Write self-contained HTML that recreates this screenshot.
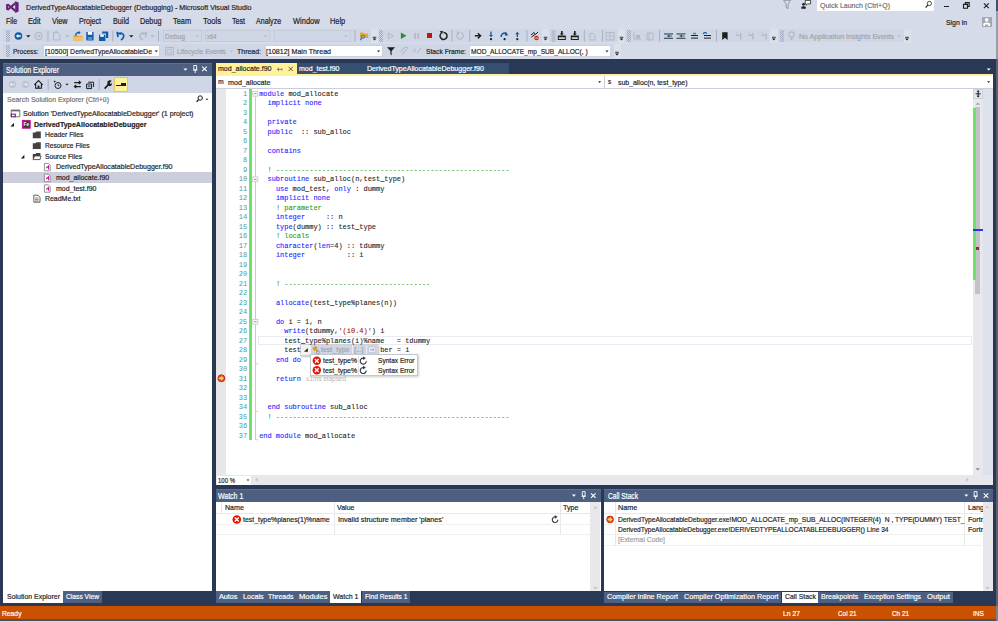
<!DOCTYPE html><html><head><meta charset="utf-8"><style>html,body{margin:0;padding:0;width:998px;height:621px;overflow:hidden;background:#293955;position:relative}.t{position:absolute;white-space:pre;line-height:1;transform-origin:0 0;-webkit-text-stroke:0.2px currentColor}</style></head><body><div style="position:absolute;left:0px;top:0px;width:998px;height:59px;background:#D6DBE9;"></div><div style="position:absolute;left:3px;top:29px;width:902px;height:13px;background:#CFD6E5;"></div><div style="position:absolute;left:3px;top:44.4px;width:610.6px;height:12.9px;background:#CFD6E5;"></div><div style="position:absolute;left:817px;top:0px;width:117px;height:11px;background:#FFFFFF;"></div><div style="position:absolute;left:43px;top:45px;width:117px;height:12px;background:#FFFFFF;border:1px solid #CCD2E0;box-sizing:border-box"></div><div style="position:absolute;left:264.5px;top:45px;width:118px;height:12px;background:#FFFFFF;border:1px solid #CCD2E0;box-sizing:border-box"></div><div style="position:absolute;left:469.3px;top:45px;width:142px;height:12px;background:#FFFFFF;border:1px solid #CCD2E0;box-sizing:border-box"></div><div style="position:absolute;left:163px;top:30px;width:38.5px;height:11.5px;background:transparent;border:1px solid #C5CBD8;box-sizing:border-box"></div><div style="position:absolute;left:204.7px;top:30px;width:65px;height:11.5px;background:transparent;border:1px solid #C5CBD8;box-sizing:border-box"></div><div style="position:absolute;left:273.6px;top:30px;width:77px;height:11.5px;background:transparent;border:1px solid #C5CBD8;box-sizing:border-box"></div><div style="position:absolute;left:3px;top:63px;width:209px;height:13px;background:#4D6082;"></div><div style="position:absolute;left:3px;top:63px;width:209px;height:0.8px;background:#5D6F92;"></div><div style="position:absolute;left:3px;top:76px;width:209px;height:17px;background:#CFD6E5;"></div><div style="position:absolute;left:3px;top:93px;width:209px;height:12px;background:#FFFFFF;"></div><div style="position:absolute;left:3px;top:105px;width:209px;height:486px;background:#FFFFFF;"></div><div style="position:absolute;left:3px;top:172.3px;width:209px;height:11px;background:#CCCEDB;"></div><div style="position:absolute;left:3px;top:591px;width:59.5px;height:11.5px;background:#FFFFFF;"></div><div style="position:absolute;left:63px;top:591px;width:38.5px;height:11.5px;background:#4D6082;"></div><div style="position:absolute;left:215.5px;top:63px;width:81.5px;height:12px;background:#FFF29D;"></div><div style="position:absolute;left:297px;top:63px;width:212px;height:11px;background:#364E6F;"></div><div style="position:absolute;left:215.5px;top:74px;width:777px;height:1.5px;background:#FFF29D;"></div><div style="position:absolute;left:215.5px;top:75.5px;width:777px;height:12.5px;background:#FFFFFF;"></div><div style="position:absolute;left:215.5px;top:88px;width:777px;height:1px;background:#CCCEDB;"></div><div style="position:absolute;left:215.5px;top:89px;width:777px;height:386px;background:#FFFFFF;"></div><div style="position:absolute;left:215.5px;top:89px;width:10.8px;height:385.5px;background:#E6E7E8;"></div><div style="position:absolute;left:248.5px;top:89px;width:3px;height:351px;background:#6CE26C;"></div><div style="position:absolute;left:972px;top:89px;width:20px;height:386px;background:#FFFFFF;"></div><div style="position:absolute;left:975px;top:104px;width:6px;height:365px;background:#E8E8EC;"></div><div style="position:absolute;left:973px;top:107.6px;width:2.5px;height:172px;background:#6CE26C;"></div><div style="position:absolute;left:975.5px;top:107px;width:5px;height:187px;background:#C2C3C9;"></div><div style="position:absolute;left:215.5px;top:474.5px;width:777.3px;height:10.7px;background:#E8E8EC;"></div><div style="position:absolute;left:216.5px;top:475.5px;width:34px;height:9px;background:#FFFFFF;"></div><div style="position:absolute;left:215.5px;top:489.2px;width:385px;height:12.5px;background:#4D6082;"></div><div style="position:absolute;left:215.5px;top:489.2px;width:385px;height:0.8px;background:#5D6F92;"></div><div style="position:absolute;left:215.5px;top:501.6px;width:385px;height:89px;background:#FFFFFF;"></div><div style="position:absolute;left:590.2px;top:501.6px;width:10.2px;height:89px;background:#E8E8EC;"></div><div style="position:absolute;left:220.9px;top:501.6px;width:0.8px;height:11.5px;background:#E4E4EA;"></div><div style="position:absolute;left:215.5px;top:513px;width:375px;height:1px;background:#E8E8EC;"></div><div style="position:absolute;left:333.8px;top:501.6px;width:1px;height:33px;background:#E8E8EC;"></div><div style="position:absolute;left:559.8px;top:501.6px;width:1px;height:33px;background:#E8E8EC;"></div><div style="position:absolute;left:215.5px;top:524.2px;width:375px;height:1px;background:#F0F0F0;"></div><div style="position:absolute;left:215.5px;top:534.4px;width:375px;height:1px;background:#F0F0F0;"></div><div style="position:absolute;left:215.5px;top:590.5px;width:114px;height:12px;background:#4D6082;"></div><div style="position:absolute;left:329.6px;top:590.5px;width:31.6px;height:12px;background:#FFFFFF;"></div><div style="position:absolute;left:362px;top:590.5px;width:48.4px;height:12px;background:#4D6082;"></div><div style="position:absolute;left:604.2px;top:489.2px;width:388.6px;height:12.5px;background:#4D6082;"></div><div style="position:absolute;left:604.2px;top:489.2px;width:388.6px;height:0.8px;background:#5D6F92;"></div><div style="position:absolute;left:604.2px;top:501.6px;width:388.6px;height:89px;background:#FFFFFF;"></div><div style="position:absolute;left:982.5px;top:501.6px;width:10.3px;height:89px;background:#E8E8EC;"></div><div style="position:absolute;left:604.2px;top:513px;width:378px;height:1px;background:#E8E8EC;"></div><div style="position:absolute;left:614.9px;top:501.6px;width:1px;height:43px;background:#E8E8EC;"></div><div style="position:absolute;left:964.3px;top:501.6px;width:1px;height:43px;background:#E8E8EC;"></div><div style="position:absolute;left:604.2px;top:523.9px;width:378px;height:1px;background:#F0F0F0;"></div><div style="position:absolute;left:604.2px;top:534.3px;width:378px;height:1px;background:#F0F0F0;"></div><div style="position:absolute;left:604.2px;top:544.5px;width:378px;height:1px;background:#F0F0F0;"></div><div style="position:absolute;left:604.2px;top:591.7px;width:177px;height:11px;background:#4D6082;"></div><div style="position:absolute;left:781.5px;top:591.7px;width:36px;height:11px;background:#FFFFFF;"></div><div style="position:absolute;left:817.5px;top:591.7px;width:135.5px;height:11px;background:#4D6082;"></div><div style="position:absolute;left:0px;top:606.4px;width:998px;height:12.8px;background:#CA5100;"></div><div style="position:absolute;left:0px;top:619.2px;width:998px;height:1.8px;background:#4A5060;"></div><div style="position:absolute;left:943.7px;top:6.1px;width:5.4px;height:1.3px;background:#1E1E1E;"></div><div style="position:absolute;left:981.7px;top:16.8px;width:10px;height:10px;background:#A5A8B0;"></div><div style="position:absolute;left:996px;top:0px;width:2px;height:621px;background:#596070;"></div><div style="position:absolute;left:996px;top:0px;width:2px;height:11px;background:#3A5478;"></div><div style="position:absolute;left:996px;top:11px;width:2px;height:48px;background:#9A9EA8;"></div><div style="position:absolute;left:996px;top:606.4px;width:2px;height:15px;background:#7A7F88;"></div><div style="position:absolute;left:371px;top:29px;width:7px;height:13.5px;background:#DCE1EC;"></div><div style="position:absolute;left:427.2px;top:33.2px;width:5px;height:4.9px;background:#C0160A;"></div><div style="position:absolute;left:541.5px;top:29px;width:7px;height:13.5px;background:#DCE1EC;"></div><div style="position:absolute;left:618px;top:29px;width:7px;height:13.5px;background:#DCE1EC;"></div><div style="position:absolute;left:770px;top:29px;width:7.5px;height:13.5px;background:#DCE1EC;"></div><div style="position:absolute;left:903.6px;top:29px;width:7px;height:13.8px;background:#DCE1EC;"></div><div style="position:absolute;left:613.6px;top:44px;width:7px;height:13.5px;background:#DCE1EC;"></div><div style="position:absolute;left:114.4px;top:77.3px;width:13.4px;height:14.3px;background:#FFF29D;border:1px solid #E5C365;box-sizing:border-box"></div><div style="position:absolute;left:116.4px;top:85.2px;width:9.8px;height:0.9px;background:#1E1E1E;"></div><div style="position:absolute;left:120.6px;top:83.4px;width:5.6px;height:2.6px;background:#1E1E1E;"></div><div style="position:absolute;left:603.6px;top:76px;width:1px;height:12px;background:#CCCEDB;"></div><div style="position:absolute;left:983.2px;top:89px;width:9.6px;height:386px;background:#DDE1EB;"></div><div style="position:absolute;left:973.2px;top:89px;width:10px;height:386px;background:#E8E8EC;"></div><div style="position:absolute;left:973.2px;top:89px;width:10px;height:9.5px;background:#E3E8F3;border:1px solid #C9D0DF;box-sizing:border-box"></div><div style="position:absolute;left:975.1px;top:107px;width:5.2px;height:187.4px;background:#C2C3C9;"></div><div style="position:absolute;left:973px;top:107.6px;width:3px;height:172.2px;background:#6CE26C;"></div><div style="position:absolute;left:972.5px;top:229.3px;width:10.7px;height:1.6px;background:#3535E0;"></div><div style="position:absolute;left:976.2px;top:246.8px;width:3.3px;height:3.2px;background:#A0262A;"></div><div style="position:absolute;left:258.4px;top:335.8px;width:713.6px;height:9.2px;background:transparent;border:1.3px solid #EAEAF1;box-sizing:border-box"></div><div style="position:absolute;left:300.2px;top:343.9px;width:78.2px;height:11.8px;background:#F2F2F2;border:1px solid #CDD0D8;box-sizing:border-box;box-shadow:1px 1px 2px rgba(0,0,0,0.25)"></div><div style="position:absolute;left:310.6px;top:344.6px;width:67px;height:10.4px;background:#CED5E4;"></div><div style="position:absolute;left:351.6px;top:345px;width:0.8px;height:9.6px;background:#E8ECF4;"></div><div style="position:absolute;left:366px;top:345px;width:0.8px;height:9.6px;background:#E8ECF4;"></div><div style="position:absolute;left:310.4px;top:354.3px;width:107.6px;height:21.5px;background:#FFFFFF;border:1px solid #C3C6CF;box-sizing:border-box;box-shadow:1px 1px 2px rgba(0,0,0,0.2)"></div><div style="position:absolute;left:357.9px;top:356.3px;width:0.8px;height:9px;background:#E0E0E0;"></div><div style="position:absolute;left:357.9px;top:365.7px;width:0.8px;height:9px;background:#E0E0E0;"></div><svg style="position:absolute;left:0;top:0" width="998" height="621" viewBox="0 0 998 621"><g fill="#68217A"><path d="M15.2 1.3 L18.6 2.6 V11.5 L15.2 12.9 Z"/><path d="M6.1 4.3 L8.3 3.7 V10.4 L6.1 9.8 Z"/><path d="M15.6 1.6 V4.6 L8.3 10.4 L7 9.2 Z"/><path d="M15.6 12.6 V9.6 L8.3 3.7 L7 4.9 Z"/></g><path d="M783.6 0.3 H790.6 L788 4.3 V8.6 L786.2 7.6 V4.3 Z" fill="none" stroke="#8E929C" stroke-width="0.9"/><circle cx="803.6" cy="4.3" r="1.4" fill="#1E1E1E"/><path d="M801.4 8.8 V6.8 Q803.6 5.6 805.8 6.8 V8.8 Z" fill="#1E1E1E"/><path d="M805.2 0.4 H810.6 V3.9 H807.6 L806.2 5.2 V3.9 H805.2 Z" fill="#fff" stroke="#1E1E1E" stroke-width="0.8"/><circle cx="929.4" cy="3.5" r="2.1" fill="none" stroke="#333" stroke-width="0.9"/><path d="M927.9 5 L925.6 7.6" stroke="#333" stroke-width="1.2"/><path d="M965.4 4.2 V2.6 H969.2 V6.4 H967.6 M963.5 4.4 H967.5 V8.2 H963.5 Z" fill="none" stroke="#1E1E1E" stroke-width="1.1"/><path d="M983.9 3.3 L988.8 8.1 M988.8 3.3 L983.9 8.1" stroke="#1E1E1E" stroke-width="1.1"/><circle cx="986.7" cy="19.9" r="1.8" fill="#fff"/><path d="M983.3 25.9 V23.4 Q986.7 21.6 990.1 23.4 V25.9 H988.3 V24.6 H985.1 V25.9 Z" fill="#fff"/><rect x="6" y="30" width="1" height="1" fill="#A3AABB"/><rect x="8" y="30" width="1" height="1" fill="#A3AABB"/><rect x="7" y="31" width="1" height="1" fill="#A3AABB"/><rect x="9" y="31" width="1" height="1" fill="#A3AABB"/><rect x="6" y="32" width="1" height="1" fill="#A3AABB"/><rect x="8" y="32" width="1" height="1" fill="#A3AABB"/><rect x="7" y="33" width="1" height="1" fill="#A3AABB"/><rect x="9" y="33" width="1" height="1" fill="#A3AABB"/><rect x="6" y="34" width="1" height="1" fill="#A3AABB"/><rect x="8" y="34" width="1" height="1" fill="#A3AABB"/><rect x="7" y="35" width="1" height="1" fill="#A3AABB"/><rect x="9" y="35" width="1" height="1" fill="#A3AABB"/><rect x="6" y="36" width="1" height="1" fill="#A3AABB"/><rect x="8" y="36" width="1" height="1" fill="#A3AABB"/><rect x="7" y="37" width="1" height="1" fill="#A3AABB"/><rect x="9" y="37" width="1" height="1" fill="#A3AABB"/><rect x="6" y="38" width="1" height="1" fill="#A3AABB"/><rect x="8" y="38" width="1" height="1" fill="#A3AABB"/><rect x="7" y="39" width="1" height="1" fill="#A3AABB"/><rect x="9" y="39" width="1" height="1" fill="#A3AABB"/><rect x="6" y="40" width="1" height="1" fill="#A3AABB"/><rect x="8" y="40" width="1" height="1" fill="#A3AABB"/><rect x="7" y="41" width="1" height="1" fill="#A3AABB"/><rect x="9" y="41" width="1" height="1" fill="#A3AABB"/><circle cx="18.4" cy="36" r="3.8" fill="#0E5AA7"/><path d="M16 36 L18.2 33.9 V35.3 H20.8 V36.7 H18.2 V38.1 Z" fill="#fff"/><path d="M26.1 35.199999999999996 H30.5 L28.3 37.62 Z" fill="#1E1E1E"/><circle cx="38.5" cy="36" r="3.6" fill="none" stroke="#B3B8C3" stroke-width="1.2"/><path d="M40.6 36 L38.6 34.2 V35.4 H36.4 V36.6 H38.6 V37.8 Z" fill="#B3B8C3"/><rect x="47.5" y="31" width="1" height="10.5" fill="#A9B0BF"/><path d="M53.5 32.5 H57.8 L60 34.7 V40 H53.5 Z" fill="none" stroke="#B3B8C3" stroke-width="1"/><rect x="55" y="31" width="2" height="2" fill="#B3B8C3"/><path d="M65.1 35.199999999999996 H69.5 L67.3 37.62 Z" fill="#B3B8C3"/><path d="M73.5 35 H77 L78 36 H82.4 V40.6 H73.5 Z" fill="#E8A735"/><path d="M73.5 37 H82.6 V40.6 H73.5 Z" fill="#F2C26A"/><path d="M75 35.5 Q75 32 78.5 32 V30.8 L80.6 32.6 L78.5 34.4 V33.2 Q76.2 33.2 76.2 35.5 Z" fill="#0E5AA7"/><path d="M86.3 32 H93.6 V40.4 H86.3 Z" fill="#0E5AA7"/><rect x="87.8" y="32" width="4.4" height="2.8" fill="#fff"/><rect x="87.8" y="37" width="4.4" height="3.4" fill="#5A8FCC"/><path d="M99 34.8 H105.4 V41 H99 Z" fill="#0E5AA7"/><rect x="100.2" y="34.8" width="3.6" height="2" fill="#fff"/><path d="M102.2 31.4 H108.2 V38 H106 V33.4 H102.2 Z" fill="#0E5AA7"/><rect x="112.3" y="31" width="1" height="10.5" fill="#A9B0BF"/><path d="M118 37.2 L117.2 32.8 L121 34.3 M118 34 Q121.5 31.8 123.5 34.8 Q124.5 37.5 121 40" fill="none" stroke="#0E5AA7" stroke-width="1.6"/><path d="M129.10000000000002 35.199999999999996 H133.5 L131.3 37.62 Z" fill="#1E1E1E"/><path d="M145.6 37.2 L146.4 32.8 L142.6 34.3 M145.6 34 Q142.1 31.8 140.1 34.8 Q139.1 37.5 142.6 40" fill="none" stroke="#B3B8C3" stroke-width="1.5"/><path d="M150.4 35.199999999999996 H154.79999999999998 L152.6 37.62 Z" fill="#B3B8C3"/><rect x="158" y="31" width="1" height="10.5" fill="#A9B0BF"/><path d="M195.6 35.5 H198.79999999999998 L197.2 37.26 Z" fill="#B3B8C3"/><path d="M263.9 35.5 H267.1 L265.5 37.26 Z" fill="#B3B8C3"/><path d="M344.4 35.5 H347.6 L346 37.26 Z" fill="#B3B8C3"/><rect x="354.5" y="30" width="1" height="11.5" fill="#A9B0BF"/><path d="M360 32.5 H363 L364 33.5 H368.2 V38 H360 Z" fill="#E8A735"/><circle cx="363" cy="36.6" r="1.6" fill="none" stroke="#2B79D0" stroke-width="1"/><path d="M362 37.8 L360.2 40" stroke="#2B79D0" stroke-width="1.2"/><rect x="372.7" y="36.8" width="3.6" height="0.9" fill="#1E1E1E"/><path d="M372.6 38.4 H376.4 L374.5 40.6 Z" fill="#1E1E1E"/><rect x="379" y="30" width="1" height="1" fill="#A3AABB"/><rect x="381" y="30" width="1" height="1" fill="#A3AABB"/><rect x="380" y="31" width="1" height="1" fill="#A3AABB"/><rect x="382" y="31" width="1" height="1" fill="#A3AABB"/><rect x="379" y="32" width="1" height="1" fill="#A3AABB"/><rect x="381" y="32" width="1" height="1" fill="#A3AABB"/><rect x="380" y="33" width="1" height="1" fill="#A3AABB"/><rect x="382" y="33" width="1" height="1" fill="#A3AABB"/><rect x="379" y="34" width="1" height="1" fill="#A3AABB"/><rect x="381" y="34" width="1" height="1" fill="#A3AABB"/><rect x="380" y="35" width="1" height="1" fill="#A3AABB"/><rect x="382" y="35" width="1" height="1" fill="#A3AABB"/><rect x="379" y="36" width="1" height="1" fill="#A3AABB"/><rect x="381" y="36" width="1" height="1" fill="#A3AABB"/><rect x="380" y="37" width="1" height="1" fill="#A3AABB"/><rect x="382" y="37" width="1" height="1" fill="#A3AABB"/><rect x="379" y="38" width="1" height="1" fill="#A3AABB"/><rect x="381" y="38" width="1" height="1" fill="#A3AABB"/><rect x="380" y="39" width="1" height="1" fill="#A3AABB"/><rect x="382" y="39" width="1" height="1" fill="#A3AABB"/><rect x="379" y="40" width="1" height="1" fill="#A3AABB"/><rect x="381" y="40" width="1" height="1" fill="#A3AABB"/><rect x="380" y="41" width="1" height="1" fill="#A3AABB"/><rect x="382" y="41" width="1" height="1" fill="#A3AABB"/><path d="M388.3 32.8 L393.2 35.8 L388.3 38.8 Z" fill="none" stroke="#B3B8C3" stroke-width="1"/><path d="M400.9 32.5 L406.4 35.8 L400.9 39.1 Z" fill="#2A8F2A"/><rect x="414.2" y="33" width="1.6" height="6" fill="#B3B8C3"/><rect x="417.4" y="33" width="1.6" height="6" fill="#B3B8C3"/><path d="M441 33.5 A3.5 3.5 0 1 0 443.5 32.4" fill="none" stroke="#1E1E1E" stroke-width="1.5"/><path d="M439.6 31.2 L443.2 31 L442 34.2 Z" fill="#1E1E1E"/><rect x="451.5" y="30" width="1" height="11.5" fill="#A9B0BF"/><path d="M458 33.5 A3.2 3.2 0 1 0 461 32.8" fill="none" stroke="#B3B8C3" stroke-width="1.2"/><path d="M456.4 31.6 L460.2 31.8 L458.2 34.6 Z" fill="#B3B8C3"/><rect x="469.2" y="30" width="1" height="11.5" fill="#A9B0BF"/><path d="M474.8 35.8 H480.2 M477.8 33.2 L480.6 35.8 L477.8 38.4" fill="none" stroke="#1E1E1E" stroke-width="1.4"/><path d="M491 31.5 V36" stroke="#0E5AA7" stroke-width="1.3"/><path d="M489 35 H493 L491 37.2 Z" fill="#0E5AA7"/><circle cx="491" cy="39.2" r="1.1" fill="#1E1E1E"/><path d="M501 37 Q501.5 32.8 505.5 33 L507 34" fill="none" stroke="#0E5AA7" stroke-width="1.5"/><path d="M505.6 31.8 L508.4 35.4 L504.6 35.6 Z" fill="#0E5AA7"/><circle cx="504.6" cy="39.2" r="1.1" fill="#1E1E1E"/><path d="M517.3 37 V33.5" stroke="#0E5AA7" stroke-width="1.3"/><path d="M515.3 34.2 H519.3 L517.3 31.8 Z" fill="#0E5AA7"/><circle cx="517.3" cy="39.2" r="1.1" fill="#1E1E1E"/><rect x="526.5" y="30" width="1" height="11.5" fill="#A9B0BF"/><path d="M531 35 L534 32.5 L535.5 34.5 L538 32 M531.5 37 L535 34.5" fill="none" stroke="#1E1E1E" stroke-width="1"/><circle cx="536.5" cy="38" r="2.2" fill="#E51400"/><rect x="535.3" y="37.6" width="2.4" height="0.9" fill="#fff"/><rect x="543.7" y="36.8" width="3.6" height="0.9" fill="#1E1E1E"/><path d="M543.6 38.4 H547.4 L545.5 40.6 Z" fill="#1E1E1E"/><rect x="551.5" y="30" width="1" height="1" fill="#A3AABB"/><rect x="553.5" y="30" width="1" height="1" fill="#A3AABB"/><rect x="552.5" y="31" width="1" height="1" fill="#A3AABB"/><rect x="554.5" y="31" width="1" height="1" fill="#A3AABB"/><rect x="551.5" y="32" width="1" height="1" fill="#A3AABB"/><rect x="553.5" y="32" width="1" height="1" fill="#A3AABB"/><rect x="552.5" y="33" width="1" height="1" fill="#A3AABB"/><rect x="554.5" y="33" width="1" height="1" fill="#A3AABB"/><rect x="551.5" y="34" width="1" height="1" fill="#A3AABB"/><rect x="553.5" y="34" width="1" height="1" fill="#A3AABB"/><rect x="552.5" y="35" width="1" height="1" fill="#A3AABB"/><rect x="554.5" y="35" width="1" height="1" fill="#A3AABB"/><rect x="551.5" y="36" width="1" height="1" fill="#A3AABB"/><rect x="553.5" y="36" width="1" height="1" fill="#A3AABB"/><rect x="552.5" y="37" width="1" height="1" fill="#A3AABB"/><rect x="554.5" y="37" width="1" height="1" fill="#A3AABB"/><rect x="551.5" y="38" width="1" height="1" fill="#A3AABB"/><rect x="553.5" y="38" width="1" height="1" fill="#A3AABB"/><rect x="552.5" y="39" width="1" height="1" fill="#A3AABB"/><rect x="554.5" y="39" width="1" height="1" fill="#A3AABB"/><rect x="551.5" y="40" width="1" height="1" fill="#A3AABB"/><rect x="553.5" y="40" width="1" height="1" fill="#A3AABB"/><rect x="552.5" y="41" width="1" height="1" fill="#A3AABB"/><rect x="554.5" y="41" width="1" height="1" fill="#A3AABB"/><path d="M557.8 35.5 V40 H565.8 V35.5" fill="#1E1E1E"/><rect x="558.8" y="37.4" width="6" height="1.4" fill="#fff"/><path d="M561.0 31 H562.5999999999999 V33.6 H563.8 L561.8 35.6 L559.8 33.6 H561.0 Z" fill="#1E1E1E"/><path d="M570.8 35.5 V40 H578.8 V35.5" fill="#1E1E1E"/><rect x="571.8" y="37.4" width="6" height="1.4" fill="#fff"/><path d="M574.0 31 H575.5999999999999 V33.6 H576.8 L574.8 35.6 L572.8 33.6 H574.0 Z" fill="#1E1E1E"/><rect x="583.8" y="30" width="1" height="11.5" fill="#A9B0BF"/><path d="M590 33.5 H593 L595 35.5 V40 H590 Z" fill="none" stroke="#B3B8C3" stroke-width="1"/><rect x="602" y="30" width="1" height="11.5" fill="#A9B0BF"/><rect x="606" y="32.5" width="8" height="7.5" fill="none" stroke="#B3B8C3" stroke-width="1"/><path d="M606 36 H614 M610 32.5 V40" stroke="#B3B8C3" stroke-width="0.8"/><rect x="619.7" y="36.8" width="3.6" height="0.9" fill="#1E1E1E"/><path d="M619.6 38.4 H623.4 L621.5 40.6 Z" fill="#1E1E1E"/><rect x="627" y="30" width="1" height="1" fill="#A3AABB"/><rect x="629" y="30" width="1" height="1" fill="#A3AABB"/><rect x="628" y="31" width="1" height="1" fill="#A3AABB"/><rect x="630" y="31" width="1" height="1" fill="#A3AABB"/><rect x="627" y="32" width="1" height="1" fill="#A3AABB"/><rect x="629" y="32" width="1" height="1" fill="#A3AABB"/><rect x="628" y="33" width="1" height="1" fill="#A3AABB"/><rect x="630" y="33" width="1" height="1" fill="#A3AABB"/><rect x="627" y="34" width="1" height="1" fill="#A3AABB"/><rect x="629" y="34" width="1" height="1" fill="#A3AABB"/><rect x="628" y="35" width="1" height="1" fill="#A3AABB"/><rect x="630" y="35" width="1" height="1" fill="#A3AABB"/><rect x="627" y="36" width="1" height="1" fill="#A3AABB"/><rect x="629" y="36" width="1" height="1" fill="#A3AABB"/><rect x="628" y="37" width="1" height="1" fill="#A3AABB"/><rect x="630" y="37" width="1" height="1" fill="#A3AABB"/><rect x="627" y="38" width="1" height="1" fill="#A3AABB"/><rect x="629" y="38" width="1" height="1" fill="#A3AABB"/><rect x="628" y="39" width="1" height="1" fill="#A3AABB"/><rect x="630" y="39" width="1" height="1" fill="#A3AABB"/><rect x="627" y="40" width="1" height="1" fill="#A3AABB"/><rect x="629" y="40" width="1" height="1" fill="#A3AABB"/><rect x="628" y="41" width="1" height="1" fill="#A3AABB"/><rect x="630" y="41" width="1" height="1" fill="#A3AABB"/><path d="M634 32.5 V39 H641" fill="none" stroke="#B3B8C3" stroke-width="1.2"/><rect x="636" y="35" width="4" height="3.5" fill="#B3B8C3"/><path d="M647 33 H653 V40 H647 Z M649 33 V40" fill="none" stroke="#B3B8C3" stroke-width="1"/><rect x="659" y="30" width="1" height="11.5" fill="#A9B0BF"/><rect x="664.0" y="33.5" width="9" height="0.9" fill="#1E1E1E"/><rect x="664.0" y="37.8" width="9" height="0.9" fill="#1E1E1E"/><path d="M666.5 36 L669.5 34.4 V37.6 Z" fill="#0E5AA7"/><rect x="668.5" y="35.6" width="3.5" height="0.9" fill="#0E5AA7"/><rect x="676.5" y="33.5" width="9" height="0.9" fill="#1E1E1E"/><rect x="676.5" y="37.8" width="9" height="0.9" fill="#1E1E1E"/><path d="M679 36 L682 34.4 V37.6 Z" fill="#0E5AA7"/><rect x="681" y="35.6" width="3.5" height="0.9" fill="#0E5AA7"/><rect x="691" y="35" width="7" height="1" fill="#1E1E1E"/><rect x="691" y="37.6" width="7" height="1" fill="#1E1E1E"/><rect x="693" y="32.8" width="3" height="1.6" fill="#3CAA3C"/><rect x="704" y="35" width="7" height="1" fill="#1E1E1E"/><rect x="704" y="37.6" width="7" height="1" fill="#1E1E1E"/><path d="M703 33.8 Q705 31.6 707 33.4" fill="none" stroke="#0E5AA7" stroke-width="1.1"/><rect x="716" y="30" width="1" height="11.5" fill="#A9B0BF"/><path d="M722.2 32.2 H727.6 V40 L724.9 37.8 L722.2 40 Z" fill="#1E1E1E"/><path d="M736.3 32.5 L738.8 35 M735.8 35.5 H739.8" fill="none" stroke="#B3B8C3" stroke-width="1"/><rect x="740.0" y="33" width="1.4" height="6.5" fill="#B3B8C3"/><path d="M748.5 32.5 L751 35 M748 35.5 H752" fill="none" stroke="#B3B8C3" stroke-width="1"/><rect x="752.2" y="33" width="1.4" height="6.5" fill="#B3B8C3"/><path d="M761.7 32.5 L764.2 35 M761.2 35.5 H765.2" fill="none" stroke="#B3B8C3" stroke-width="1"/><rect x="765.4000000000001" y="33" width="1.4" height="6.5" fill="#B3B8C3"/><rect x="772.0" y="36.8" width="3.6" height="0.9" fill="#1E1E1E"/><path d="M771.9 38.4 H775.6999999999999 L773.8 40.6 Z" fill="#1E1E1E"/><rect x="780" y="30" width="1" height="1" fill="#A3AABB"/><rect x="782" y="30" width="1" height="1" fill="#A3AABB"/><rect x="781" y="31" width="1" height="1" fill="#A3AABB"/><rect x="783" y="31" width="1" height="1" fill="#A3AABB"/><rect x="780" y="32" width="1" height="1" fill="#A3AABB"/><rect x="782" y="32" width="1" height="1" fill="#A3AABB"/><rect x="781" y="33" width="1" height="1" fill="#A3AABB"/><rect x="783" y="33" width="1" height="1" fill="#A3AABB"/><rect x="780" y="34" width="1" height="1" fill="#A3AABB"/><rect x="782" y="34" width="1" height="1" fill="#A3AABB"/><rect x="781" y="35" width="1" height="1" fill="#A3AABB"/><rect x="783" y="35" width="1" height="1" fill="#A3AABB"/><rect x="780" y="36" width="1" height="1" fill="#A3AABB"/><rect x="782" y="36" width="1" height="1" fill="#A3AABB"/><rect x="781" y="37" width="1" height="1" fill="#A3AABB"/><rect x="783" y="37" width="1" height="1" fill="#A3AABB"/><rect x="780" y="38" width="1" height="1" fill="#A3AABB"/><rect x="782" y="38" width="1" height="1" fill="#A3AABB"/><rect x="781" y="39" width="1" height="1" fill="#A3AABB"/><rect x="783" y="39" width="1" height="1" fill="#A3AABB"/><rect x="780" y="40" width="1" height="1" fill="#A3AABB"/><rect x="782" y="40" width="1" height="1" fill="#A3AABB"/><rect x="781" y="41" width="1" height="1" fill="#A3AABB"/><rect x="783" y="41" width="1" height="1" fill="#A3AABB"/><circle cx="791.5" cy="34.5" r="2.6" fill="none" stroke="#B3B8C3" stroke-width="1.1"/><rect x="790.4" y="37.4" width="2.2" height="2.6" fill="#B3B8C3"/><path d="M897.6999999999999 35.5 H900.9 L899.3 37.26 Z" fill="#B3B8C3"/><rect x="905.2" y="36.8" width="3.6" height="0.9" fill="#1E1E1E"/><path d="M905.1 38.4 H908.9 L907 40.6 Z" fill="#1E1E1E"/><rect x="6" y="45" width="1" height="1" fill="#A3AABB"/><rect x="8" y="45" width="1" height="1" fill="#A3AABB"/><rect x="7" y="46" width="1" height="1" fill="#A3AABB"/><rect x="9" y="46" width="1" height="1" fill="#A3AABB"/><rect x="6" y="47" width="1" height="1" fill="#A3AABB"/><rect x="8" y="47" width="1" height="1" fill="#A3AABB"/><rect x="7" y="48" width="1" height="1" fill="#A3AABB"/><rect x="9" y="48" width="1" height="1" fill="#A3AABB"/><rect x="6" y="49" width="1" height="1" fill="#A3AABB"/><rect x="8" y="49" width="1" height="1" fill="#A3AABB"/><rect x="7" y="50" width="1" height="1" fill="#A3AABB"/><rect x="9" y="50" width="1" height="1" fill="#A3AABB"/><rect x="6" y="51" width="1" height="1" fill="#A3AABB"/><rect x="8" y="51" width="1" height="1" fill="#A3AABB"/><rect x="7" y="52" width="1" height="1" fill="#A3AABB"/><rect x="9" y="52" width="1" height="1" fill="#A3AABB"/><rect x="6" y="53" width="1" height="1" fill="#A3AABB"/><rect x="8" y="53" width="1" height="1" fill="#A3AABB"/><rect x="7" y="54" width="1" height="1" fill="#A3AABB"/><rect x="9" y="54" width="1" height="1" fill="#A3AABB"/><rect x="6" y="55" width="1" height="1" fill="#A3AABB"/><rect x="8" y="55" width="1" height="1" fill="#A3AABB"/><rect x="7" y="56" width="1" height="1" fill="#A3AABB"/><rect x="9" y="56" width="1" height="1" fill="#A3AABB"/><path d="M154.70000000000002 50.5 H157.9 L156.3 52.26 Z" fill="#1E1E1E"/><rect x="165.6" y="47.4" width="7.8" height="7.4" fill="none" stroke="#B3B8C3" stroke-width="1"/><rect x="167.6" y="49.3" width="3.6" height="3.6" fill="none" stroke="#B3B8C3" stroke-width="0.8"/><path d="M230.0 50.5 H233.2 L231.6 52.26 Z" fill="#B3B8C3"/><path d="M377.0 50.5 H380.20000000000005 L378.6 52.26 Z" fill="#1E1E1E"/><path d="M387 47.2 H395 L391.6 51 V55.6 L390.4 54.2 V51 Z" fill="#1E1E1E"/><path d="M400.5 52 L404 48 M402 54.5 L407.5 48.5 M404 47.5 H408" fill="none" stroke="#B3B8C3" stroke-width="1.1"/><path d="M413 49 L416 52 M416 49 L413 52 M417 53 L421 48" fill="none" stroke="#B3B8C3" stroke-width="1"/><path d="M605.4 50.5 H608.6 L607 52.26 Z" fill="#1E1E1E"/><rect x="615.2" y="51.8" width="3.6" height="0.9" fill="#1E1E1E"/><path d="M615.1 53.4 H618.9 L617 55.6 Z" fill="#1E1E1E"/><path d="M183.4 68.4 H187.4 L185.4 70.8 Z" fill="#fff"/><path d="M193.8 65.5 H196.6 V70 H193.8 Z M193 70 H197.4 M195.2 70 V73" fill="none" stroke="#fff" stroke-width="0.9"/><path d="M202.2 66.6 L206.8 71.2 M206.8 66.6 L202.2 71.2" stroke="#fff" stroke-width="1.1"/><circle cx="12.5" cy="84.4" r="3.6" fill="#BFC4CE"/><path d="M10.4 84.4 H14.6 M10.4 84.4 L12 82.8 M10.4 84.4 L12 86" stroke="#E6E9F0" stroke-width="1"/><circle cx="25.5" cy="84.4" r="3.6" fill="#BFC4CE"/><path d="M23.4 84.4 H27.6 M27.6 84.4 L26 82.8 M27.6 84.4 L26 86" stroke="#E6E9F0" stroke-width="1"/><path d="M34.3 84.8 L38.5 80.6 L42.7 84.8 M35.6 83.8 V88.3 H41.4 V83.8" fill="none" stroke="#1E1E1E" stroke-width="1.1"/><rect x="37.6" y="85.6" width="1.8" height="2.7" fill="#1E1E1E"/><rect x="47.7" y="79" width="1" height="11" fill="#A9B0BF"/><circle cx="58" cy="85.5" r="3" fill="none" stroke="#1E1E1E" stroke-width="1"/><path d="M58 84 V85.6 H59.4" fill="none" stroke="#1E1E1E" stroke-width="0.8"/><path d="M53.6 80.8 L56 81 L54.4 82.8 Z" fill="#1E1E1E"/><path d="M65.4 83.8 H68.6 L67 85.55999999999999 Z" fill="#1E1E1E"/><path d="M74.2 82.6 H80.4 M78.8 81 L80.6 82.6 L78.8 84.2 M80.8 86.6 H74.6 M76.2 85 L74.4 86.6 L76.2 88.2" fill="none" stroke="#1E1E1E" stroke-width="1.1"/><path d="M86.6 84 H91.6 V88.6 H86.6 Z M88.2 82.2 H93.6 V87" fill="none" stroke="#1E1E1E" stroke-width="1"/><rect x="87.8" y="85.2" width="2.6" height="2.2" fill="#2B79D0"/><rect x="98.7" y="79" width="1" height="11" fill="#A9B0BF"/><path d="M104.6 88.6 L108.6 84.4" stroke="#1E1E1E" stroke-width="1.7"/><path d="M107.4 81.6 Q109.4 79.6 111.8 80.8 L109.8 82.8 L110.4 84 L111.8 83.2 Q112.4 85.6 109.6 86.2 Q108.2 86 107.4 84.8 Z" fill="#1E1E1E"/><circle cx="200.2" cy="98" r="2.2" fill="none" stroke="#1E1E1E" stroke-width="1"/><path d="M198.7 99.6 L196.6 101.8" stroke="#1E1E1E" stroke-width="1.3"/><path d="M205.6 98.7 H208.4 L207 100.24000000000001 Z" fill="#1E1E1E"/><path d="M11.2 110 H19.8 V116.8 H11.2 Z" fill="none" stroke="#6D6D6D" stroke-width="0.9"/><rect x="11.2" y="110" width="8.6" height="1.4" fill="#6D6D6D"/><rect x="10.8" y="113.6" width="5" height="3.6" fill="#68217A"/><rect x="12" y="114.6" width="2.6" height="1.6" fill="#fff"/><path d="M10.4 126.4 L14 122.8 V126.4 Z" fill="#1E1E1E"/><rect x="22.4" y="120.4" width="7.8" height="7.8" fill="#3C3C3C" stroke="#C6129E" stroke-width="1"/><text x="23.6" y="126.2" font-family="Liberation Sans" font-size="4.6" font-weight="bold" fill="#fff">Fe</text><path d="M32.8 132.4 H35.4 L36.4 131.4 H40.8 V138.20000000000002 H32.8 Z" fill="#424242"/><path d="M32.8 143.2 H35.4 L36.4 142.2 H40.8 V149.0 H32.8 Z" fill="#424242"/><path d="M20.8 158.4 L24.4 154.8 V158.4 Z" fill="#1E1E1E"/><path d="M32.8 154 H35.4 L36.4 153 H40.4 V159.6 H32.8 Z" fill="#424242"/><path d="M34.6 156 H41.2 L39.8 159.6 H33.2 Z" fill="#fff" stroke="#424242" stroke-width="0.8"/><path d="M44.4 163.4 H48.4 L50.2 165.20000000000002 V170.8 H44.4 Z" fill="#fff" stroke="#8A8A8A" stroke-width="0.9"/><path d="M46.2 168.20000000000002 L48.6 166.0 V169.4" fill="none" stroke="#C6129E" stroke-width="1.1"/><path d="M44.4 174.2 H48.4 L50.2 176.0 V181.6 H44.4 Z" fill="#fff" stroke="#8A8A8A" stroke-width="0.9"/><path d="M46.2 179.0 L48.6 176.79999999999998 V180.2" fill="none" stroke="#C6129E" stroke-width="1.1"/><path d="M44.4 184.8 H48.4 L50.2 186.60000000000002 V192.20000000000002 H44.4 Z" fill="#fff" stroke="#8A8A8A" stroke-width="0.9"/><path d="M46.2 189.60000000000002 L48.6 187.4 V190.8" fill="none" stroke="#C6129E" stroke-width="1.1"/><path d="M33.8 195.2 H38 L40 197.2 V202.2 H33.8 Z" fill="#fff" stroke="#555" stroke-width="0.9"/><path d="M35 198 H38.6 M35 199.6 H38.6 M35 201 H38.6" stroke="#555" stroke-width="0.7"/><path d="M986.6 68.4 H990.8 L988.7 70.6 Z" fill="#fff"/><path d="M276.8 69.4 H282 M278.4 67.6 V71.2 M282 68.2 V70.6" fill="none" stroke="#6B6B4F" stroke-width="0.8"/><path d="M288.6 66.8 L292.8 71 M292.8 66.8 L288.6 71" stroke="#5E5638" stroke-width="1"/><text x="218" y="84" font-family="Liberation Sans" font-size="6.5" font-weight="bold" fill="#333">m</text><path d="M598.1 81.25 H601.1 L599.6 82.9 Z" fill="#1E1E1E"/><text x="607.8" y="84.2" font-family="Liberation Sans" font-size="6.5" font-weight="bold" fill="#333">s</text><path d="M987.1 81.25 H990.1 L988.6 82.9 Z" fill="#1E1E1E"/><path d="M978.2 90.6 V97 M975.6 93.8 H980.8" stroke="#1E1E1E" stroke-width="1"/><path d="M976.6 91.8 H979.8 L978.2 90.2 Z M976.6 95.8 H979.8 L978.2 97.4 Z" fill="#1E1E1E"/><path d="M975.6 104.8 H980 L977.8 102.6 Z" fill="#A0A2AA"/><path d="M975.6 468.2 H980 L977.8 470.4 Z" fill="#86888F"/><path d="M966.3 477.6 V482 L968.5 479.8 Z" fill="#C2C3C9"/><path d="M255.4 479.8 L257.6 477.6 V482 Z" fill="#C2C3C9"/><path d="M246.6 479.5 H249.4 L248 481.03999999999996 Z" fill="#1E1E1E"/><rect x="255" y="96.35" width="1" height="343.4" fill="#C9C9C9"/><rect x="255" y="439.35" width="3" height="0.9" fill="#C9C9C9"/><rect x="255" y="410.85" width="3" height="0.9" fill="#C9C9C9"/><rect x="255" y="363.35" width="3" height="0.9" fill="#C9C9C9"/><rect x="252.8" y="91.35" width="5" height="4.8" fill="#fff" stroke="#C9C9C9" stroke-width="0.9"/><rect x="254" y="93.35" width="2.6" height="0.8" fill="#777"/><rect x="252.8" y="176.85" width="5" height="4.8" fill="#fff" stroke="#C9C9C9" stroke-width="0.9"/><rect x="254" y="178.85" width="2.6" height="0.8" fill="#777"/><rect x="252.8" y="319.35" width="5" height="4.8" fill="#fff" stroke="#C9C9C9" stroke-width="0.9"/><rect x="254" y="321.35" width="2.6" height="0.8" fill="#777"/><circle cx="221.4" cy="378.3" r="3.5" fill="#E0442C" stroke="#B5211A" stroke-width="0.8"/><path d="M218.9 377.3 H221.2 V375.5 L224 378.3 L221.2 381.1 V379.3 H218.9 Z" fill="#F7D54A"/><path d="M304 351.8 L307.8 348 V351.8 Z" fill="#1E1E1E"/><path d="M312.4 348.6 L315.4 345.8 L317.6 348 L316.6 349 L318.6 351 L317.6 352 L315.6 350 L314.6 351 Z" fill="#D89A2A"/><circle cx="317.8" cy="352.4" r="1.6" fill="none" stroke="#8A8A8A" stroke-width="0.7"/><rect x="368.6" y="347" width="7" height="5.6" fill="#E9EDF5" stroke="#B8BFCD" stroke-width="0.6"/><path d="M370 349.8 H374 M372.6 348.6 L374 349.8 L372.6 351" fill="none" stroke="#8890A0" stroke-width="0.7"/><circle cx="316.8" cy="360.8" r="4.2" fill="#E51400"/><path d="M314.91 358.91 L318.69 362.69 M318.69 358.91 L314.91 362.69" stroke="#fff" stroke-width="1.344"/><path d="M366.25 361.2 A3.0 3.0 0 1 1 364.0 358.2" fill="none" stroke="#333" stroke-width="1.1"/><path d="M363.0 356.4 L365.79999999999995 358.0 L363.2 360.0 Z" fill="#333"/><circle cx="316.8" cy="370.2" r="4.2" fill="#E51400"/><path d="M314.91 368.31 L318.69 372.09 M318.69 368.31 L314.91 372.09" stroke="#fff" stroke-width="1.344"/><path d="M366.25 370.59999999999997 A3.0 3.0 0 1 1 364.0 367.59999999999997" fill="none" stroke="#333" stroke-width="1.1"/><path d="M363.0 365.79999999999995 L365.79999999999995 367.4 L363.2 369.4 Z" fill="#333"/><path d="M571.9 494.5 H575.9 L573.9 496.8 Z" fill="#fff"/><path d="M582.3000000000001 491.6 H585.1 V496.20000000000005 H582.3000000000001 Z M581.5 496.20000000000005 H585.9000000000001 M583.7 496.20000000000005 V499.20000000000005" fill="none" stroke="#fff" stroke-width="0.9"/><path d="M591.0 493.3 L595.5999999999999 497.90000000000003 M595.5999999999999 493.3 L591.0 497.90000000000003" stroke="#fff" stroke-width="1.1"/><path d="M964.3 494.5 H968.3 L966.3 496.8 Z" fill="#fff"/><path d="M974.2 491.6 H977.0 V496.20000000000005 H974.2 Z M973.4 496.20000000000005 H977.8000000000001 M975.6 496.20000000000005 V499.20000000000005" fill="none" stroke="#fff" stroke-width="0.9"/><path d="M983.7 493.3 L988.3 497.90000000000003 M988.3 493.3 L983.7 497.90000000000003" stroke="#fff" stroke-width="1.1"/><path d="M593.2 508.4 H597.6 L595.4 506.2 Z" fill="#C2C3C9"/><path d="M593.2 587 H597.6 L595.4 589.2 Z" fill="#C2C3C9"/><path d="M985.4 508.4 H989.8 L987.6 506.2 Z" fill="#C2C3C9"/><path d="M985.4 587 H989.8 L987.6 589.2 Z" fill="#C2C3C9"/><circle cx="236.8" cy="519.5" r="4.3" fill="#E51400"/><path d="M234.865 517.565 L238.735 521.435 M238.735 517.565 L234.865 521.435" stroke="#fff" stroke-width="1.376"/><path d="M557.86 519.8 A2.8 2.8 0 1 1 555.76 517.0" fill="none" stroke="#333" stroke-width="1.1"/><path d="M554.8000000000001 515.2 L557.6 516.8 L555.0 518.8 Z" fill="#333"/><circle cx="610.1" cy="519.4" r="3.4" fill="#E0442C" stroke="#B5211A" stroke-width="0.8"/><path d="M607.7 518.4 H609.9 V516.7 L612.6 519.4 L609.9 522.1 V520.4 H607.7 Z" fill="#F7D54A"/></svg><div class="t" id="t0" style="left:26.00px;top:4.00px;font-family:'Liberation Sans',sans-serif;font-size:8.0px;color:#1E1E1E;transform:scaleX(0.8886);">DerivedTypeAllocatableDebugger (Debugging) - Microsoft Visual Studio</div><div class="t" id="t1" style="left:6.00px;top:17.00px;font-family:'Liberation Sans',sans-serif;font-size:8.5px;color:#1E1E1E;transform:scaleX(0.8100);">File</div><div class="t" id="t2" style="left:28.00px;top:17.00px;font-family:'Liberation Sans',sans-serif;font-size:8.5px;color:#1E1E1E;transform:scaleX(0.8597);">Edit</div><div class="t" id="t3" style="left:51.80px;top:17.00px;font-family:'Liberation Sans',sans-serif;font-size:8.5px;color:#1E1E1E;transform:scaleX(0.8533);">View</div><div class="t" id="t4" style="left:78.50px;top:17.00px;font-family:'Liberation Sans',sans-serif;font-size:8.5px;color:#1E1E1E;transform:scaleX(0.8349);">Project</div><div class="t" id="t5" style="left:112.70px;top:17.00px;font-family:'Liberation Sans',sans-serif;font-size:8.5px;color:#1E1E1E;transform:scaleX(0.8516);">Build</div><div class="t" id="t6" style="left:140.00px;top:17.00px;font-family:'Liberation Sans',sans-serif;font-size:8.5px;color:#1E1E1E;transform:scaleX(0.8618);">Debug</div><div class="t" id="t7" style="left:173.00px;top:17.00px;font-family:'Liberation Sans',sans-serif;font-size:8.5px;color:#1E1E1E;transform:scaleX(0.8703);">Team</div><div class="t" id="t8" style="left:202.50px;top:17.00px;font-family:'Liberation Sans',sans-serif;font-size:8.5px;color:#1E1E1E;transform:scaleX(0.9121);">Tools</div><div class="t" id="t9" style="left:231.70px;top:17.00px;font-family:'Liberation Sans',sans-serif;font-size:8.5px;color:#1E1E1E;transform:scaleX(0.8401);">Test</div><div class="t" id="t10" style="left:256.00px;top:17.00px;font-family:'Liberation Sans',sans-serif;font-size:8.5px;color:#1E1E1E;transform:scaleX(0.8298);">Analyze</div><div class="t" id="t11" style="left:292.70px;top:17.00px;font-family:'Liberation Sans',sans-serif;font-size:8.5px;color:#1E1E1E;transform:scaleX(0.8798);">Window</div><div class="t" id="t12" style="left:330.30px;top:17.00px;font-family:'Liberation Sans',sans-serif;font-size:8.5px;color:#1E1E1E;transform:scaleX(0.8636);">Help</div><div class="t" id="t13" style="left:820.00px;top:2.00px;font-family:'Liberation Sans',sans-serif;font-size:8.0px;color:#717171;transform:scaleX(0.8771);">Quick Launch (Ctrl+Q)</div><div class="t" id="t14" style="left:946.00px;top:19.00px;font-family:'Liberation Sans',sans-serif;font-size:8.0px;color:#1E1E1E;transform:scaleX(0.8582);">Sign in</div><div class="t" id="t15" style="left:13.00px;top:48.00px;font-family:'Liberation Sans',sans-serif;font-size:8.0px;color:#1E1E1E;transform:scaleX(0.8193);">Process:</div><div class="t" id="t16" style="left:44.50px;top:48.00px;font-family:'Liberation Sans',sans-serif;font-size:8.0px;color:#1E1E1E;transform:scaleX(0.8686);">[10500] DerivedTypeAllocatableDe</div><div class="t" id="t17" style="left:176.60px;top:48.00px;font-family:'Liberation Sans',sans-serif;font-size:8.0px;color:#A2A4A5;transform:scaleX(0.8476);">Lifecycle Events</div><div class="t" id="t18" style="left:237.00px;top:48.00px;font-family:'Liberation Sans',sans-serif;font-size:8.0px;color:#1E1E1E;transform:scaleX(0.8703);">Thread:</div><div class="t" id="t19" style="left:266.00px;top:48.00px;font-family:'Liberation Sans',sans-serif;font-size:8.0px;color:#1E1E1E;transform:scaleX(0.8821);">[10812] Main Thread</div><div class="t" id="t20" style="left:425.50px;top:48.00px;font-family:'Liberation Sans',sans-serif;font-size:8.0px;color:#1E1E1E;transform:scaleX(0.8407);">Stack Frame:</div><div class="t" id="t21" style="left:471.00px;top:48.00px;font-family:'Liberation Sans',sans-serif;font-size:8.0px;color:#1E1E1E;transform:scaleX(0.8263);">MOD_ALLOCATE_mp_SUB_ALLOC(, )</div><div class="t" id="t22" style="left:165.00px;top:33.00px;font-family:'Liberation Sans',sans-serif;font-size:8.0px;color:#A2A4A5;transform:scaleX(0.8482);">Debug</div><div class="t" id="t23" style="left:207.00px;top:33.00px;font-family:'Liberation Sans',sans-serif;font-size:8.0px;color:#A2A4A5;transform:scaleX(0.7361);">x64</div><div class="t" id="t24" style="left:799.00px;top:33.00px;font-family:'Liberation Sans',sans-serif;font-size:8.0px;color:#A2A4A5;transform:scaleX(0.8827);">No Application Insights Events</div><div class="t" id="t25" style="left:6.00px;top:66.00px;font-family:'Liberation Sans',sans-serif;font-size:8.5px;color:#FFFFFF;transform:scaleX(0.8187);">Solution Explorer</div><div class="t" id="t26" style="left:6.60px;top:96.00px;font-family:'Liberation Sans',sans-serif;font-size:8.0px;color:#717171;transform:scaleX(0.8673);">Search Solution Explorer (Ctrl+ü)</div><div class="t" id="t27" style="left:23.00px;top:110.00px;font-family:'Liberation Sans',sans-serif;font-size:8.0px;color:#1E1E1E;transform:scaleX(0.8898);">Solution &#x27;DerivedTypeAllocatableDebugger&#x27; (1 project)</div><div class="t" id="t28" style="left:33.80px;top:121.00px;font-family:'Liberation Sans',sans-serif;font-size:8.0px;color:#1E1E1E;font-weight:bold;transform:scaleX(0.8827);">DerivedTypeAllocatableDebugger</div><div class="t" id="t29" style="left:44.70px;top:131.00px;font-family:'Liberation Sans',sans-serif;font-size:8.0px;color:#1E1E1E;transform:scaleX(0.8488);">Header Files</div><div class="t" id="t30" style="left:44.70px;top:142.00px;font-family:'Liberation Sans',sans-serif;font-size:8.0px;color:#1E1E1E;transform:scaleX(0.8340);">Resource Files</div><div class="t" id="t31" style="left:44.70px;top:153.00px;font-family:'Liberation Sans',sans-serif;font-size:8.0px;color:#1E1E1E;transform:scaleX(0.8320);">Source Files</div><div class="t" id="t32" style="left:55.50px;top:163.00px;font-family:'Liberation Sans',sans-serif;font-size:8.0px;color:#1E1E1E;transform:scaleX(0.8819);">DerivedTypeAllocatableDebugger.f90</div><div class="t" id="t33" style="left:55.50px;top:174.00px;font-family:'Liberation Sans',sans-serif;font-size:8.0px;color:#1E1E1E;transform:scaleX(0.8730);">mod_allocate.f90</div><div class="t" id="t34" style="left:55.50px;top:185.00px;font-family:'Liberation Sans',sans-serif;font-size:8.0px;color:#1E1E1E;transform:scaleX(0.8735);">mod_test.f90</div><div class="t" id="t35" style="left:44.70px;top:195.00px;font-family:'Liberation Sans',sans-serif;font-size:8.0px;color:#1E1E1E;transform:scaleX(0.8678);">ReadMe.txt</div><div class="t" id="t36" style="left:6.70px;top:593.00px;font-family:'Liberation Sans',sans-serif;font-size:8.0px;color:#1E1E1E;transform:scaleX(0.8700);">Solution Explorer</div><div class="t" id="t37" style="left:66.00px;top:593.00px;font-family:'Liberation Sans',sans-serif;font-size:8.0px;color:#FFFFFF;transform:scaleX(0.8371);">Class View</div><div class="t" id="t38" style="left:218.00px;top:65.00px;font-family:'Liberation Sans',sans-serif;font-size:8.0px;color:#1E1E1E;transform:scaleX(0.8779);">mod_allocate.f90</div><div class="t" id="t39" style="left:298.80px;top:65.00px;font-family:'Liberation Sans',sans-serif;font-size:8.0px;color:#FFFFFF;transform:scaleX(0.8757);">mod_test.f90</div><div class="t" id="t40" style="left:367.00px;top:65.00px;font-family:'Liberation Sans',sans-serif;font-size:8.0px;color:#FFFFFF;transform:scaleX(0.8850);">DerivedTypeAllocatableDebugger.f90</div><div class="t" id="t41" style="left:228.00px;top:79.00px;font-family:'Liberation Sans',sans-serif;font-size:8.0px;color:#1E1E1E;transform:scaleX(0.8930);">mod_allocate</div><div class="t" id="t42" style="left:617.50px;top:79.00px;font-family:'Liberation Sans',sans-serif;font-size:8.0px;color:#1E1E1E;transform:scaleX(0.8634);">sub_alloc(n, test_type)</div><div class="t" id="t43" style="left:218.00px;top:477.00px;font-family:'Liberation Sans',sans-serif;font-size:8.0px;color:#1E1E1E;transform:scaleX(0.7493);">100 %</div><div class="t" id="t44" style="left:218.20px;top:492.00px;font-family:'Liberation Sans',sans-serif;font-size:8.5px;color:#FFFFFF;transform:scaleX(0.8194);">Watch 1</div><div class="t" id="t45" style="left:224.50px;top:504.00px;font-family:'Liberation Sans',sans-serif;font-size:8.0px;color:#1E1E1E;transform:scaleX(0.8808);">Name</div><div class="t" id="t46" style="left:336.90px;top:504.00px;font-family:'Liberation Sans',sans-serif;font-size:8.0px;color:#1E1E1E;transform:scaleX(0.8805);">Value</div><div class="t" id="t47" style="left:563.20px;top:504.00px;font-family:'Liberation Sans',sans-serif;font-size:8.0px;color:#1E1E1E;transform:scaleX(0.8937);">Type</div><div class="t" id="t48" style="left:243.40px;top:516.00px;font-family:'Liberation Sans',sans-serif;font-size:8.0px;color:#1E1E1E;transform:scaleX(0.8645);">test_type%planes(1)%name</div><div class="t" id="t49" style="left:338.00px;top:516.00px;font-family:'Liberation Sans',sans-serif;font-size:8.0px;color:#1E1E1E;transform:scaleX(0.9008);">Invalid structure member &#x27;planes&#x27;</div><div class="t" id="t50" style="left:219.00px;top:593.00px;font-family:'Liberation Sans',sans-serif;font-size:8.0px;color:#FFFFFF;transform:scaleX(0.9038);">Autos</div><div class="t" id="t51" style="left:243.00px;top:593.00px;font-family:'Liberation Sans',sans-serif;font-size:8.0px;color:#FFFFFF;transform:scaleX(0.8865);">Locals</div><div class="t" id="t52" style="left:268.00px;top:593.00px;font-family:'Liberation Sans',sans-serif;font-size:8.0px;color:#FFFFFF;transform:scaleX(0.8685);">Threads</div><div class="t" id="t53" style="left:299.00px;top:593.00px;font-family:'Liberation Sans',sans-serif;font-size:8.0px;color:#FFFFFF;transform:scaleX(0.9421);">Modules</div><div class="t" id="t54" style="left:333.00px;top:593.00px;font-family:'Liberation Sans',sans-serif;font-size:8.0px;color:#1E1E1E;transform:scaleX(0.8779);">Watch 1</div><div class="t" id="t55" style="left:365.00px;top:593.00px;font-family:'Liberation Sans',sans-serif;font-size:8.0px;color:#FFFFFF;transform:scaleX(0.8310);">Find Results 1</div><div class="t" id="t56" style="left:607.80px;top:492.00px;font-family:'Liberation Sans',sans-serif;font-size:8.5px;color:#FFFFFF;transform:scaleX(0.7840);">Call Stack</div><div class="t" id="t57" style="left:617.90px;top:504.00px;font-family:'Liberation Sans',sans-serif;font-size:8.0px;color:#1E1E1E;transform:scaleX(0.9042);">Name</div><div class="t" id="t58" style="left:967.70px;top:504.00px;font-family:'Liberation Sans',sans-serif;font-size:8.0px;color:#1E1E1E;transform:scaleX(0.8990);">Lang</div><div class="t" id="t59" style="left:618.00px;top:516.00px;font-family:'Liberation Sans',sans-serif;font-size:8.0px;color:#1E1E1E;transform:scaleX(0.8335);">DerivedTypeAllocatableDebugger.exe!MOD_ALLOCATE_mp_SUB_ALLOC(INTEGER(4)  N , TYPE(DUMMY) TEST_</div><div class="t" id="t60" style="left:618.00px;top:526.00px;font-family:'Liberation Sans',sans-serif;font-size:8.0px;color:#1E1E1E;transform:scaleX(0.8250);">DerivedTypeAllocatableDebugger.exe!DERIVEDTYPEALLOCATABLEDEBUGGER() Line 34</div><div class="t" id="t61" style="left:618.00px;top:536.00px;font-family:'Liberation Sans',sans-serif;font-size:8.0px;color:#A0A0A0;transform:scaleX(0.8524);">[External Code]</div><div class="t" id="t62" style="left:968.00px;top:516.00px;font-family:'Liberation Sans',sans-serif;font-size:8.0px;color:#1E1E1E;transform:scaleX(0.8881);">Fortr</div><div class="t" id="t63" style="left:968.00px;top:526.00px;font-family:'Liberation Sans',sans-serif;font-size:8.0px;color:#1E1E1E;transform:scaleX(0.8881);">Fortr</div><div class="t" id="t64" style="left:607.00px;top:593.00px;font-family:'Liberation Sans',sans-serif;font-size:8.0px;color:#FFFFFF;transform:scaleX(0.8920);">Compiler Inline Report</div><div class="t" id="t65" style="left:683.70px;top:593.00px;font-family:'Liberation Sans',sans-serif;font-size:8.0px;color:#FFFFFF;transform:scaleX(0.9015);">Compiler Optimization Report</div><div class="t" id="t66" style="left:784.60px;top:593.00px;font-family:'Liberation Sans',sans-serif;font-size:8.0px;color:#1E1E1E;transform:scaleX(0.8607);">Call Stack</div><div class="t" id="t67" style="left:821.30px;top:593.00px;font-family:'Liberation Sans',sans-serif;font-size:8.0px;color:#FFFFFF;transform:scaleX(0.8805);">Breakpoints</div><div class="t" id="t68" style="left:864.00px;top:593.00px;font-family:'Liberation Sans',sans-serif;font-size:8.0px;color:#FFFFFF;transform:scaleX(0.8602);">Exception Settings</div><div class="t" id="t69" style="left:927.00px;top:593.00px;font-family:'Liberation Sans',sans-serif;font-size:8.0px;color:#FFFFFF;transform:scaleX(0.9494);">Output</div><div class="t" id="t70" style="left:2.00px;top:610.00px;font-family:'Liberation Sans',sans-serif;font-size:8.0px;color:#FFFFFF;transform:scaleX(0.8432);">Ready</div><div class="t" id="t71" style="left:782.60px;top:610.00px;font-family:'Liberation Sans',sans-serif;font-size:8.0px;color:#FFFFFF;transform:scaleX(0.8487);">Ln 27</div><div class="t" id="t72" style="left:838.00px;top:610.00px;font-family:'Liberation Sans',sans-serif;font-size:8.0px;color:#FFFFFF;transform:scaleX(0.8000);">Col 21</div><div class="t" id="t73" style="left:892.30px;top:610.00px;font-family:'Liberation Sans',sans-serif;font-size:8.0px;color:#FFFFFF;transform:scaleX(0.7959);">Ch 21</div><div class="t" id="t74" style="left:973.00px;top:610.00px;font-family:'Liberation Sans',sans-serif;font-size:8.0px;color:#FFFFFF;transform:scaleX(0.8244);">INS</div><div class="t" id="t75" style="left:259.20px;top:91.00px;font-family:'Liberation Mono',sans-serif;font-size:7.0px;color:#1E1E1E;letter-spacing:-0.03px;-webkit-text-stroke:0.1px currentColor;"><span style="color:#1F1FFF">module</span><span style="color:#1E1E1E"> mod_allocate</span></div><div class="t" id="t76" style="left:243.03px;top:91.00px;font-family:'Liberation Mono',sans-serif;font-size:7.0px;color:#3A9BB8;letter-spacing:-0.03px;-webkit-text-stroke:0;">1</div><div class="t" id="t77" style="left:259.20px;top:100.00px;font-family:'Liberation Mono',sans-serif;font-size:7.0px;color:#1E1E1E;letter-spacing:-0.03px;-webkit-text-stroke:0.1px currentColor;"><span style="color:#1E1E1E">  </span><span style="color:#1F1FFF">implicit none</span></div><div class="t" id="t78" style="left:243.03px;top:100.00px;font-family:'Liberation Mono',sans-serif;font-size:7.0px;color:#3A9BB8;letter-spacing:-0.03px;-webkit-text-stroke:0;">2</div><div class="t" id="t79" style="left:243.03px;top:110.00px;font-family:'Liberation Mono',sans-serif;font-size:7.0px;color:#3A9BB8;letter-spacing:-0.03px;-webkit-text-stroke:0;">3</div><div class="t" id="t80" style="left:259.20px;top:119.00px;font-family:'Liberation Mono',sans-serif;font-size:7.0px;color:#1E1E1E;letter-spacing:-0.03px;-webkit-text-stroke:0.1px currentColor;"><span style="color:#1E1E1E">  </span><span style="color:#1F1FFF">private</span></div><div class="t" id="t81" style="left:243.03px;top:119.00px;font-family:'Liberation Mono',sans-serif;font-size:7.0px;color:#3A9BB8;letter-spacing:-0.03px;-webkit-text-stroke:0;">4</div><div class="t" id="t82" style="left:259.20px;top:129.00px;font-family:'Liberation Mono',sans-serif;font-size:7.0px;color:#1E1E1E;letter-spacing:-0.03px;-webkit-text-stroke:0.1px currentColor;"><span style="color:#1E1E1E">  </span><span style="color:#1F1FFF">public</span><span style="color:#1E1E1E">  :: sub_alloc</span></div><div class="t" id="t83" style="left:243.03px;top:129.00px;font-family:'Liberation Mono',sans-serif;font-size:7.0px;color:#3A9BB8;letter-spacing:-0.03px;-webkit-text-stroke:0;">5</div><div class="t" id="t84" style="left:243.03px;top:138.00px;font-family:'Liberation Mono',sans-serif;font-size:7.0px;color:#3A9BB8;letter-spacing:-0.03px;-webkit-text-stroke:0;">6</div><div class="t" id="t85" style="left:259.20px;top:148.00px;font-family:'Liberation Mono',sans-serif;font-size:7.0px;color:#1E1E1E;letter-spacing:-0.03px;-webkit-text-stroke:0.1px currentColor;"><span style="color:#1E1E1E">  </span><span style="color:#1F1FFF">contains</span></div><div class="t" id="t86" style="left:243.03px;top:148.00px;font-family:'Liberation Mono',sans-serif;font-size:7.0px;color:#3A9BB8;letter-spacing:-0.03px;-webkit-text-stroke:0;">7</div><div class="t" id="t87" style="left:243.03px;top:157.00px;font-family:'Liberation Mono',sans-serif;font-size:7.0px;color:#3A9BB8;letter-spacing:-0.03px;-webkit-text-stroke:0;">8</div><div class="t" id="t88" style="left:259.20px;top:167.00px;font-family:'Liberation Mono',sans-serif;font-size:7.0px;color:#1E1E1E;letter-spacing:-0.03px;-webkit-text-stroke:0.1px currentColor;"><span style="color:#1E1E1E">  </span><span style="color:#1E9E1E">! --------------------------------------------------------</span></div><div class="t" id="t89" style="left:243.03px;top:167.00px;font-family:'Liberation Mono',sans-serif;font-size:7.0px;color:#3A9BB8;letter-spacing:-0.03px;-webkit-text-stroke:0;">9</div><div class="t" id="t90" style="left:259.20px;top:176.00px;font-family:'Liberation Mono',sans-serif;font-size:7.0px;color:#1E1E1E;letter-spacing:-0.03px;-webkit-text-stroke:0.1px currentColor;"><span style="color:#1E1E1E">  </span><span style="color:#1F1FFF">subroutine</span><span style="color:#1E1E1E"> sub_alloc(n,test_type)</span></div><div class="t" id="t91" style="left:238.86px;top:176.00px;font-family:'Liberation Mono',sans-serif;font-size:7.0px;color:#3A9BB8;letter-spacing:-0.03px;-webkit-text-stroke:0;">10</div><div class="t" id="t92" style="left:259.20px;top:186.00px;font-family:'Liberation Mono',sans-serif;font-size:7.0px;color:#1E1E1E;letter-spacing:-0.03px;-webkit-text-stroke:0.1px currentColor;"><span style="color:#1E1E1E">    </span><span style="color:#1F1FFF">use</span><span style="color:#1E1E1E"> mod_test, </span><span style="color:#1F1FFF">only</span><span style="color:#1E1E1E"> : dummy</span></div><div class="t" id="t93" style="left:238.86px;top:186.00px;font-family:'Liberation Mono',sans-serif;font-size:7.0px;color:#3A9BB8;letter-spacing:-0.03px;-webkit-text-stroke:0;">11</div><div class="t" id="t94" style="left:259.20px;top:195.00px;font-family:'Liberation Mono',sans-serif;font-size:7.0px;color:#1E1E1E;letter-spacing:-0.03px;-webkit-text-stroke:0.1px currentColor;"><span style="color:#1E1E1E">    </span><span style="color:#1F1FFF">implicit none</span></div><div class="t" id="t95" style="left:238.86px;top:195.00px;font-family:'Liberation Mono',sans-serif;font-size:7.0px;color:#3A9BB8;letter-spacing:-0.03px;-webkit-text-stroke:0;">12</div><div class="t" id="t96" style="left:259.20px;top:205.00px;font-family:'Liberation Mono',sans-serif;font-size:7.0px;color:#1E1E1E;letter-spacing:-0.03px;-webkit-text-stroke:0.1px currentColor;"><span style="color:#1E1E1E">    </span><span style="color:#1E9E1E">! parameter</span></div><div class="t" id="t97" style="left:238.86px;top:205.00px;font-family:'Liberation Mono',sans-serif;font-size:7.0px;color:#3A9BB8;letter-spacing:-0.03px;-webkit-text-stroke:0;">13</div><div class="t" id="t98" style="left:259.20px;top:214.00px;font-family:'Liberation Mono',sans-serif;font-size:7.0px;color:#1E1E1E;letter-spacing:-0.03px;-webkit-text-stroke:0.1px currentColor;"><span style="color:#1E1E1E">    </span><span style="color:#1F1FFF">integer</span><span style="color:#1E1E1E">     :: n</span></div><div class="t" id="t99" style="left:238.86px;top:214.00px;font-family:'Liberation Mono',sans-serif;font-size:7.0px;color:#3A9BB8;letter-spacing:-0.03px;-webkit-text-stroke:0;">14</div><div class="t" id="t100" style="left:259.20px;top:224.00px;font-family:'Liberation Mono',sans-serif;font-size:7.0px;color:#1E1E1E;letter-spacing:-0.03px;-webkit-text-stroke:0.1px currentColor;"><span style="color:#1E1E1E">    </span><span style="color:#1F1FFF">type</span><span style="color:#1E1E1E">(dummy) :: test_type</span></div><div class="t" id="t101" style="left:238.86px;top:224.00px;font-family:'Liberation Mono',sans-serif;font-size:7.0px;color:#3A9BB8;letter-spacing:-0.03px;-webkit-text-stroke:0;">15</div><div class="t" id="t102" style="left:259.20px;top:233.00px;font-family:'Liberation Mono',sans-serif;font-size:7.0px;color:#1E1E1E;letter-spacing:-0.03px;-webkit-text-stroke:0.1px currentColor;"><span style="color:#1E1E1E">    </span><span style="color:#1E9E1E">! locals</span></div><div class="t" id="t103" style="left:238.86px;top:233.00px;font-family:'Liberation Mono',sans-serif;font-size:7.0px;color:#3A9BB8;letter-spacing:-0.03px;-webkit-text-stroke:0;">16</div><div class="t" id="t104" style="left:259.20px;top:243.00px;font-family:'Liberation Mono',sans-serif;font-size:7.0px;color:#1E1E1E;letter-spacing:-0.03px;-webkit-text-stroke:0.1px currentColor;"><span style="color:#1E1E1E">    </span><span style="color:#1F1FFF">character</span><span style="color:#1E1E1E">(</span><span style="color:#1F1FFF">len</span><span style="color:#1E1E1E">=4) :: tdummy</span></div><div class="t" id="t105" style="left:238.86px;top:243.00px;font-family:'Liberation Mono',sans-serif;font-size:7.0px;color:#3A9BB8;letter-spacing:-0.03px;-webkit-text-stroke:0;">17</div><div class="t" id="t106" style="left:259.20px;top:252.00px;font-family:'Liberation Mono',sans-serif;font-size:7.0px;color:#1E1E1E;letter-spacing:-0.03px;-webkit-text-stroke:0.1px currentColor;"><span style="color:#1E1E1E">    </span><span style="color:#1F1FFF">integer</span><span style="color:#1E1E1E">          :: i</span></div><div class="t" id="t107" style="left:238.86px;top:252.00px;font-family:'Liberation Mono',sans-serif;font-size:7.0px;color:#3A9BB8;letter-spacing:-0.03px;-webkit-text-stroke:0;">18</div><div class="t" id="t108" style="left:238.86px;top:262.00px;font-family:'Liberation Mono',sans-serif;font-size:7.0px;color:#3A9BB8;letter-spacing:-0.03px;-webkit-text-stroke:0;">19</div><div class="t" id="t109" style="left:238.86px;top:271.00px;font-family:'Liberation Mono',sans-serif;font-size:7.0px;color:#3A9BB8;letter-spacing:-0.03px;-webkit-text-stroke:0;">20</div><div class="t" id="t110" style="left:259.20px;top:281.00px;font-family:'Liberation Mono',sans-serif;font-size:7.0px;color:#1E1E1E;letter-spacing:-0.03px;-webkit-text-stroke:0.1px currentColor;"><span style="color:#1E1E1E">    </span><span style="color:#1E9E1E">! -----------------------------------</span></div><div class="t" id="t111" style="left:238.86px;top:281.00px;font-family:'Liberation Mono',sans-serif;font-size:7.0px;color:#3A9BB8;letter-spacing:-0.03px;-webkit-text-stroke:0;">21</div><div class="t" id="t112" style="left:238.86px;top:290.00px;font-family:'Liberation Mono',sans-serif;font-size:7.0px;color:#3A9BB8;letter-spacing:-0.03px;-webkit-text-stroke:0;">22</div><div class="t" id="t113" style="left:259.20px;top:300.00px;font-family:'Liberation Mono',sans-serif;font-size:7.0px;color:#1E1E1E;letter-spacing:-0.03px;-webkit-text-stroke:0.1px currentColor;"><span style="color:#1E1E1E">    </span><span style="color:#1F1FFF">allocate</span><span style="color:#1E1E1E">(test_type%planes(n))</span></div><div class="t" id="t114" style="left:238.86px;top:300.00px;font-family:'Liberation Mono',sans-serif;font-size:7.0px;color:#3A9BB8;letter-spacing:-0.03px;-webkit-text-stroke:0;">23</div><div class="t" id="t115" style="left:238.86px;top:309.00px;font-family:'Liberation Mono',sans-serif;font-size:7.0px;color:#3A9BB8;letter-spacing:-0.03px;-webkit-text-stroke:0;">24</div><div class="t" id="t116" style="left:259.20px;top:319.00px;font-family:'Liberation Mono',sans-serif;font-size:7.0px;color:#1E1E1E;letter-spacing:-0.03px;-webkit-text-stroke:0.1px currentColor;"><span style="color:#1E1E1E">    </span><span style="color:#1F1FFF">do</span><span style="color:#1E1E1E"> i = 1, n</span></div><div class="t" id="t117" style="left:238.86px;top:319.00px;font-family:'Liberation Mono',sans-serif;font-size:7.0px;color:#3A9BB8;letter-spacing:-0.03px;-webkit-text-stroke:0;">25</div><div class="t" id="t118" style="left:259.20px;top:328.00px;font-family:'Liberation Mono',sans-serif;font-size:7.0px;color:#1E1E1E;letter-spacing:-0.03px;-webkit-text-stroke:0.1px currentColor;"><span style="color:#1E1E1E">      </span><span style="color:#1F1FFF">write</span><span style="color:#1E1E1E">(tdummy,</span><span style="color:#A31515">&#x27;(i0.4)&#x27;</span><span style="color:#1E1E1E">) i</span></div><div class="t" id="t119" style="left:238.86px;top:328.00px;font-family:'Liberation Mono',sans-serif;font-size:7.0px;color:#3A9BB8;letter-spacing:-0.03px;-webkit-text-stroke:0;">26</div><div class="t" id="t120" style="left:259.20px;top:338.00px;font-family:'Liberation Mono',sans-serif;font-size:7.0px;color:#1E1E1E;letter-spacing:-0.03px;-webkit-text-stroke:0.1px currentColor;"><span style="color:#1E1E1E">      test_type%planes(i)%name   = tdummy</span></div><div class="t" id="t121" style="left:238.86px;top:338.00px;font-family:'Liberation Mono',sans-serif;font-size:7.0px;color:#3A9BB8;letter-spacing:-0.03px;-webkit-text-stroke:0;">27</div><div class="t" id="t122" style="left:259.20px;top:347.00px;font-family:'Liberation Mono',sans-serif;font-size:7.0px;color:#1E1E1E;letter-spacing:-0.03px;-webkit-text-stroke:0.1px currentColor;"><span style="color:#1E1E1E">      test                   ber = i</span></div><div class="t" id="t123" style="left:238.86px;top:347.00px;font-family:'Liberation Mono',sans-serif;font-size:7.0px;color:#3A9BB8;letter-spacing:-0.03px;-webkit-text-stroke:0;">28</div><div class="t" id="t124" style="left:259.20px;top:357.00px;font-family:'Liberation Mono',sans-serif;font-size:7.0px;color:#1E1E1E;letter-spacing:-0.03px;-webkit-text-stroke:0.1px currentColor;"><span style="color:#1E1E1E">    </span><span style="color:#1F1FFF">end do</span></div><div class="t" id="t125" style="left:238.86px;top:357.00px;font-family:'Liberation Mono',sans-serif;font-size:7.0px;color:#3A9BB8;letter-spacing:-0.03px;-webkit-text-stroke:0;">29</div><div class="t" id="t126" style="left:238.86px;top:366.00px;font-family:'Liberation Mono',sans-serif;font-size:7.0px;color:#3A9BB8;letter-spacing:-0.03px;-webkit-text-stroke:0;">30</div><div class="t" id="t127" style="left:259.20px;top:376.00px;font-family:'Liberation Mono',sans-serif;font-size:7.0px;color:#1E1E1E;letter-spacing:-0.03px;-webkit-text-stroke:0.1px currentColor;"><span style="color:#1E1E1E">    </span><span style="color:#1F1FFF">return</span></div><div class="t" id="t128" style="left:238.86px;top:376.00px;font-family:'Liberation Mono',sans-serif;font-size:7.0px;color:#3A9BB8;letter-spacing:-0.03px;-webkit-text-stroke:0;">31</div><div class="t" id="t129" style="left:238.86px;top:385.00px;font-family:'Liberation Mono',sans-serif;font-size:7.0px;color:#3A9BB8;letter-spacing:-0.03px;-webkit-text-stroke:0;">32</div><div class="t" id="t130" style="left:238.86px;top:395.00px;font-family:'Liberation Mono',sans-serif;font-size:7.0px;color:#3A9BB8;letter-spacing:-0.03px;-webkit-text-stroke:0;">33</div><div class="t" id="t131" style="left:259.20px;top:404.00px;font-family:'Liberation Mono',sans-serif;font-size:7.0px;color:#1E1E1E;letter-spacing:-0.03px;-webkit-text-stroke:0.1px currentColor;"><span style="color:#1E1E1E">  </span><span style="color:#1F1FFF">end subroutine</span><span style="color:#1E1E1E"> sub_alloc</span></div><div class="t" id="t132" style="left:238.86px;top:404.00px;font-family:'Liberation Mono',sans-serif;font-size:7.0px;color:#3A9BB8;letter-spacing:-0.03px;-webkit-text-stroke:0;">34</div><div class="t" id="t133" style="left:259.20px;top:414.00px;font-family:'Liberation Mono',sans-serif;font-size:7.0px;color:#1E1E1E;letter-spacing:-0.03px;-webkit-text-stroke:0.1px currentColor;"><span style="color:#1E1E1E">  </span><span style="color:#1E9E1E">! --------------------------------------------------------</span></div><div class="t" id="t134" style="left:238.86px;top:414.00px;font-family:'Liberation Mono',sans-serif;font-size:7.0px;color:#3A9BB8;letter-spacing:-0.03px;-webkit-text-stroke:0;">35</div><div class="t" id="t135" style="left:238.86px;top:423.00px;font-family:'Liberation Mono',sans-serif;font-size:7.0px;color:#3A9BB8;letter-spacing:-0.03px;-webkit-text-stroke:0;">36</div><div class="t" id="t136" style="left:259.20px;top:433.00px;font-family:'Liberation Mono',sans-serif;font-size:7.0px;color:#1E1E1E;letter-spacing:-0.03px;-webkit-text-stroke:0.1px currentColor;"><span style="color:#1F1FFF">end module</span><span style="color:#1E1E1E"> mod_allocate</span></div><div class="t" id="t137" style="left:238.86px;top:433.00px;font-family:'Liberation Mono',sans-serif;font-size:7.0px;color:#3A9BB8;letter-spacing:-0.03px;-webkit-text-stroke:0;">37</div><div class="t" id="t138" style="left:306.30px;top:375.00px;font-family:'Liberation Sans',sans-serif;font-size:7.0px;color:#B4B4B4;transform:scaleX(0.9189);-webkit-text-stroke:0;">≤1ms elapsed</div><div class="t" id="t139" style="left:321.20px;top:346.00px;font-family:'Liberation Sans',sans-serif;font-size:8.0px;color:#A2A4AC;transform:scaleX(0.8778);">test_type</div><div class="t" id="t140" style="left:354.30px;top:346.00px;font-family:'Liberation Sans',sans-serif;font-size:8.0px;color:#A2A4AC;transform:scaleX(0.8156);">{...}</div><div class="t" id="t141" style="left:322.70px;top:357.00px;font-family:'Liberation Sans',sans-serif;font-size:8.0px;color:#1E1E1E;transform:scaleX(0.8591);">test_type%</div><div class="t" id="t142" style="left:378.40px;top:357.00px;font-family:'Liberation Sans',sans-serif;font-size:8.0px;color:#1E1E1E;transform:scaleX(0.8208);">Syntax Error</div><div class="t" id="t143" style="left:322.70px;top:367.00px;font-family:'Liberation Sans',sans-serif;font-size:8.0px;color:#1E1E1E;transform:scaleX(0.8591);">test_type%</div><div class="t" id="t144" style="left:378.40px;top:367.00px;font-family:'Liberation Sans',sans-serif;font-size:8.0px;color:#1E1E1E;transform:scaleX(0.8208);">Syntax Error</div><div style="position:absolute;left:982.5px;top:501.6px;width:10.3px;height:45px;background:#E8E8EC;"></div><div style="position:absolute;left:985.4px;top:506.2px;width:0px;height:0px;background:transparent;border-left:2.2px solid transparent;border-right:2.2px solid transparent;border-bottom:2.2px solid #C2C3C9"></div></body></html>
